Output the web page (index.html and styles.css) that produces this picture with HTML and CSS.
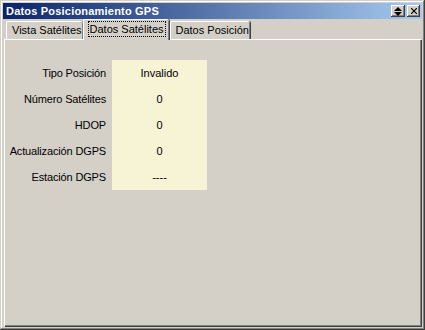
FILE: index.html
```html
<!DOCTYPE html>
<html lang="es">
<head>
    <meta charset="UTF-8">
    <title>Datos Posicionamiento GPS</title>
    <link rel="stylesheet" href="styles.css">
</head>
<body>
    <div class="window">
        <div class="titlebar">
            <span class="title">Datos Posicionamiento GPS</span>
            <div class="title-buttons">
                <button class="cap-btn" title="Restaurar">
                    <svg width="8" height="9" viewBox="0 0 8 9">
                        <path d="M4 0 L8 4 L0 4 Z" fill="#000"></path>
                        <path d="M0 5 L8 5 L4 9 Z" fill="#000"></path>
                    </svg>
                </button>
                <button class="cap-btn close" title="Cerrar">
                    <svg width="6" height="6" viewBox="0 0 6 6">
                        <path d="M0 0 L6 6 M6 0 L0 6" stroke="#000" stroke-width="1.2"></path>
                    </svg>
                </button>
            </div>
        </div>

        <div class="tabs">
            <div class="tab">Vista Satélites</div>
            <div class="tab active"><span class="focus">Datos Satélites</span></div>
            <div class="tab">Datos Posición</div>
        </div>

        <div class="panel">
            <div class="info">
                <div class="labels">
                    <div class="row">Tipo Posición</div>
                    <div class="row">Número Satélites</div>
                    <div class="row">HDOP</div>
                    <div class="row">Actualización DGPS</div>
                    <div class="row">Estación DGPS</div>
                </div>
                <div class="values">
                    <div class="row">Invalido</div>
                    <div class="row">0</div>
                    <div class="row">0</div>
                    <div class="row">0</div>
                    <div class="row">----</div>
                </div>
            </div>
        </div>
    </div>
</body>
</html>
```

FILE: styles.css
```css
:root {
    --face: #d4d0c8;
    --light: #ffffff;
    --shadow: #808080;
    --dark: #404040;
    --note: #f7f3d5;
}

* {
    margin: 0;
    padding: 0;
    box-sizing: border-box;
}

body {
    background: var(--face);
    font-family: "Liberation Sans", Arial, sans-serif;
    font-size: 11px;
    color: #000;
}

.window {
    width: 425px;
    height: 330px;
    padding: 3px;
    background: var(--face);
    box-shadow:
        inset -1px -1px var(--dark),
        inset 1px 1px var(--face),
        inset -2px -2px var(--shadow),
        inset 2px 2px var(--light);
    display: flex;
    flex-direction: column;
}

.titlebar {
    height: 16px;
    background: linear-gradient(to right, #0a246a, #a6caf0);
    display: flex;
    align-items: center;
    justify-content: space-between;
    padding: 0 2px 0 3px;
}

.title {
    color: #fff;
    font-weight: 700;
    font-size: 11px;
    letter-spacing: 0.2px;
}

.title-buttons {
    display: flex;
    gap: 2px;
}

.cap-btn {
    width: 14px;
    height: 12px;
    background: var(--face);
    border: none;
    display: flex;
    align-items: center;
    justify-content: center;
    box-shadow:
        inset -1px -1px var(--dark),
        inset 1px 1px var(--light),
        inset -2px -2px var(--shadow);
}

.cap-btn.close {
    width: 13px;
}

.tabs {
    display: flex;
    align-items: flex-end;
    height: 20px;
    margin-top: 1px;
    padding-left: 3px;
    position: relative;
    z-index: 1;
}

.tab {
    height: 18px;
    padding: 0 1px 0 5px;
    line-height: 17px;
    background: var(--face);
    border-top: 1px solid var(--light);
    border-left: 1px solid var(--light);
    border-radius: 2px 2px 0 0;
    box-shadow: inset -1px 0 var(--shadow), 1px 0 var(--dark);
    margin-right: 1px;
    margin-bottom: 1px;
}

.tab.active {
    height: 21px;
    margin: 0 1px 0 -1px;
    padding: 1px 4px 0 5px;
    line-height: 16px;
}

.focus {
    display: inline-block;
    outline: 1px dotted #000;
    outline-offset: 0;
    padding: 0 1px;
    line-height: 14px;
}

.panel {
    flex: 1;
    margin: -1px 1px 1px 1px;
    border-top: 1px solid var(--light);
    border-left: 1px solid var(--light);
    box-shadow:
        inset -1px -1px var(--shadow),
        1px 1px var(--dark);
    padding: 20px 0 0 0;
}

.info {
    display: flex;
    gap: 6px;
}

.labels {
    width: 101px;
    text-align: right;
    letter-spacing: -0.15px;
}

.values {
    width: 95px;
    background: var(--note);
    text-align: center;
}

.row {
    height: 26px;
    line-height: 26px;
    white-space: nowrap;
}
```
